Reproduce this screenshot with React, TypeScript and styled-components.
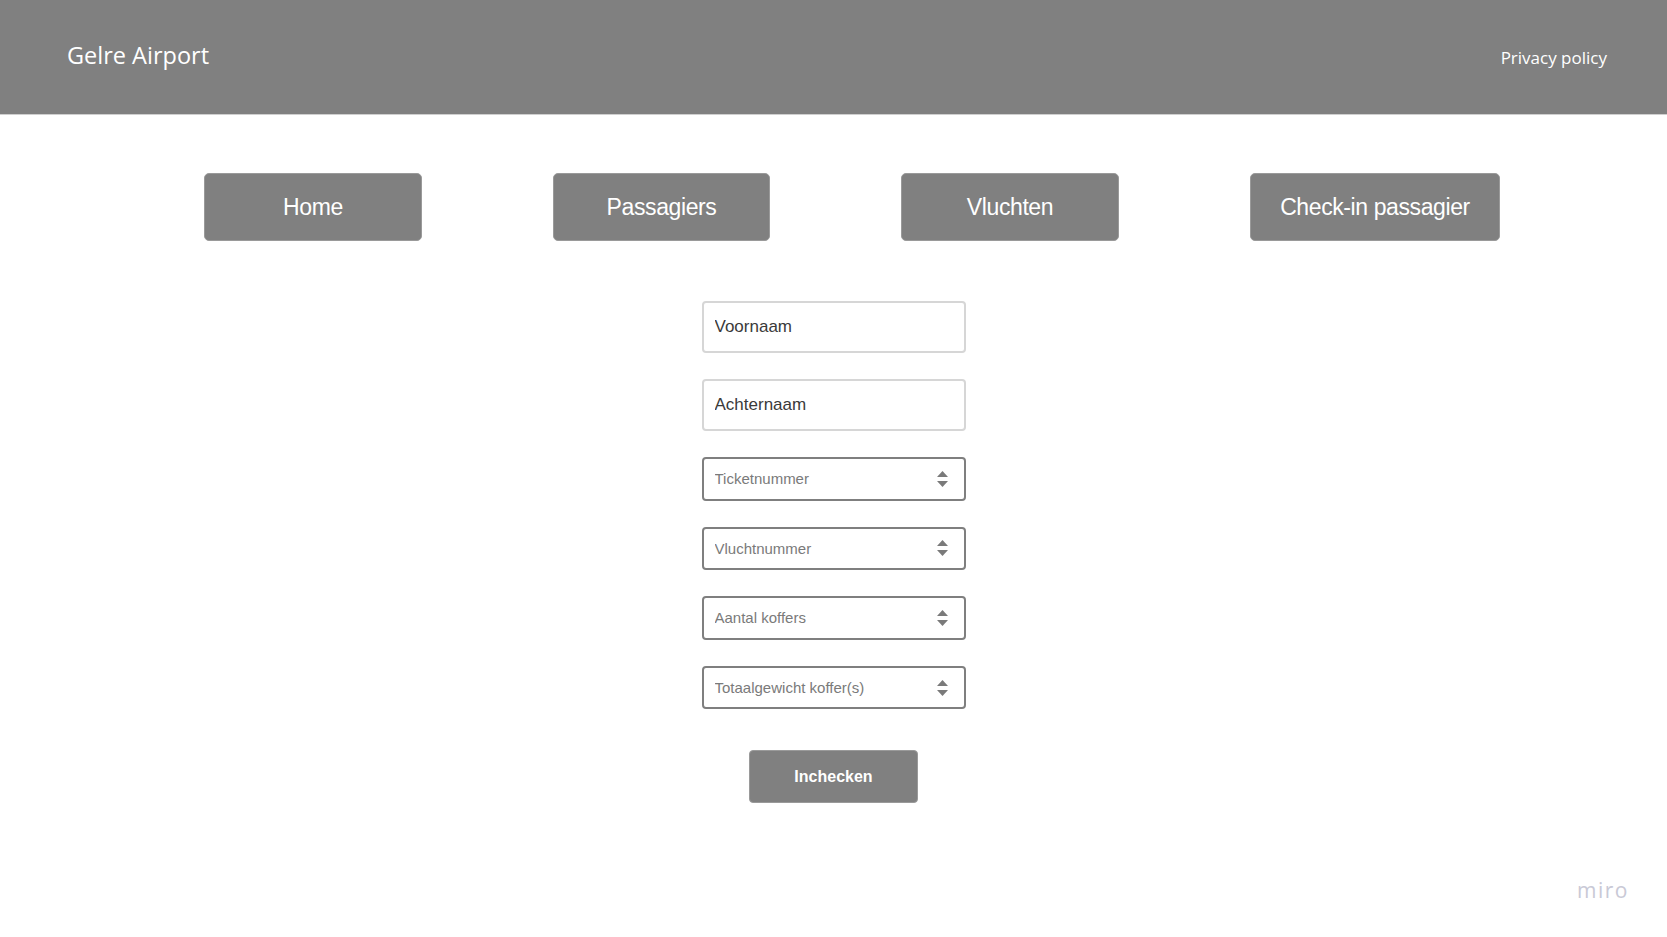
import React from "react";
import styled, { createGlobalStyle } from "styled-components";

const Global = createGlobalStyle`
  html, body { margin: 0; padding: 0; background: #ffffff; }
  body { font-family: "Liberation Sans", Arial, sans-serif; }
  * { box-sizing: border-box; }
`;

const Page = styled.div`
  position: relative;
  width: 100%;
  min-height: 937px;
  background: #ffffff;
`;

const Header = styled.header`
  height: 115px;
  background: #808080;
  border-bottom: 1px solid #cfcfcf;
  display: flex;
  align-items: center;
  justify-content: space-between;
  padding: 0 60px 0 67px;
`;

const Brand = styled.div`
  font-family: "Open Sans", "Noto Sans", sans-serif;
  font-size: 23.5px;
  color: #ffffff;
  margin-bottom: 5px;
`;

const HeaderLink = styled.a`
  font-family: "Open Sans", "Noto Sans", sans-serif;
  font-size: 17px;
  color: #ffffff;
  text-decoration: none;
  margin-top: 1px;
`;

const Nav = styled.nav`
  display: flex;
  gap: 131px;
  padding: 58px 0 0 204px;
`;

const NavButton = styled.button<{ $w: number }>`
  width: ${(p) => p.$w}px;
  height: 68px;
  border: 1px solid #9a9a9a;
  border-radius: 5px;
  background: #808080;
  color: #ffffff;
  font-family: "Liberation Sans", Arial, sans-serif;
  font-size: 23px;
  letter-spacing: -0.4px;
  padding: 0;
  cursor: pointer;
`;

const Form = styled.form`
  display: flex;
  flex-direction: column;
  align-items: center;
  gap: 26px;
  padding-top: 60px;
`;

const TextField = styled.input`
  width: 264px;
  height: 52px;
  border: 2px solid #d6d6d6;
  border-radius: 4px;
  padding: 0 11px;
  font-family: "Liberation Sans", Arial, sans-serif;
  font-size: 17px;
  color: #333333;
  outline: none;
  &::placeholder { color: #3a3a3a; }
`;

const NumberWrap = styled.div`
  position: relative;
  width: 264px;
  height: 43.6px;
  border: 2px solid #7f7f7f;
  border-radius: 4px;
  display: flex;
  align-items: center;
`;

const NumberField = styled.input`
  flex: 1;
  height: 100%;
  border: none;
  background: transparent;
  padding: 0 11px;
  font-family: "Liberation Sans", Arial, sans-serif;
  font-size: 15px;
  color: #777777;
  outline: none;
  &::placeholder { color: #7a7a7a; }
`;

const Spinner = styled.svg`
  width: 11px;
  height: 16px;
  margin-right: 16px;
  flex: none;
`;

const Submit = styled.button`
  margin-top: 15px;
  width: 169px;
  height: 53px;
  border: 1px solid #9a9a9a;
  border-radius: 4px;
  background: #808080;
  color: #ffffff;
  font-family: "Liberation Sans", Arial, sans-serif;
  font-size: 16px;
  font-weight: bold;
  cursor: pointer;
`;

const Watermark = styled.div`
  position: absolute;
  right: 38px;
  top: 876px;
  font-family: "Open Sans", "Noto Sans", sans-serif;
  font-size: 21px;
  letter-spacing: 1.5px;
  color: #c9c9d6;
`;

const NumberInput: React.FC<{ placeholder: string }> = ({ placeholder }) => (
  <NumberWrap>
    <NumberField type="text" placeholder={placeholder} />
    <Spinner viewBox="0 0 11 16">
      <polygon points="5.5,0 11,6 0,6" fill="#7a7a7a" />
      <polygon points="0,10 11,10 5.5,16" fill="#7a7a7a" />
    </Spinner>
  </NumberWrap>
);

const navItems = [
  { label: "Home", w: 218 },
  { label: "Passagiers", w: 217 },
  { label: "Vluchten", w: 218 },
  { label: "Check-in passagier", w: 250 },
];

export default function App() {
  return (
    <Page>
      <Global />
      <Header>
        <Brand>Gelre Airport</Brand>
        <HeaderLink href="#">Privacy policy</HeaderLink>
      </Header>
      <Nav>
        {navItems.map((n) => (
          <NavButton key={n.label} $w={n.w}>
            {n.label}
          </NavButton>
        ))}
      </Nav>
      <Form onSubmit={(e) => e.preventDefault()}>
        <TextField placeholder="Voornaam" />
        <TextField placeholder="Achternaam" />
        <NumberInput placeholder="Ticketnummer" />
        <NumberInput placeholder="Vluchtnummer" />
        <NumberInput placeholder="Aantal koffers" />
        <NumberInput placeholder="Totaalgewicht koffer(s)" />
        <Submit type="submit">Inchecken</Submit>
      </Form>
      <Watermark>miro</Watermark>
    </Page>
  );
}
